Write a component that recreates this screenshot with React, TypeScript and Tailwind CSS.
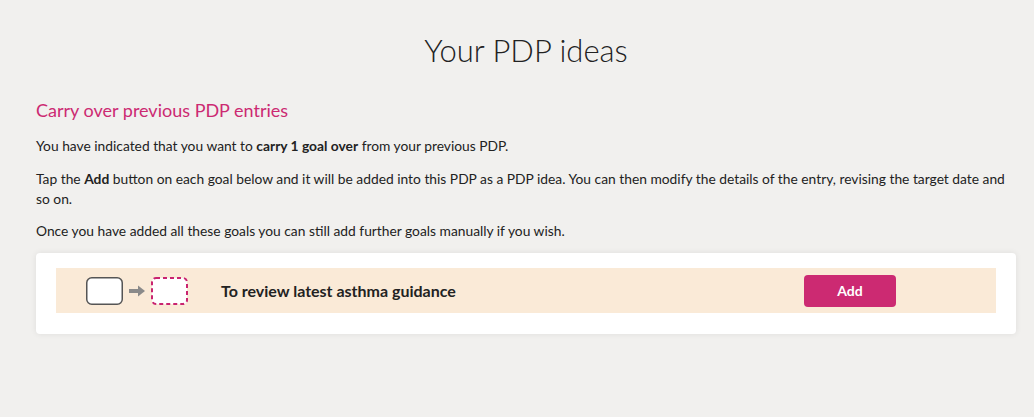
export default function App() {
  return (
    <div className="min-h-[417px] bg-[#f1f0ee] text-[#222] font-['Lato',sans-serif] pl-9 pr-[18px] pt-[28px]">
      <h1 className="text-center text-[31px] font-light leading-[44px] text-[#222]">Your PDP ideas</h1>

      <h2 className="mt-[27px] text-[18px] leading-[22px] text-[#cc2a72]">Carry over previous PDP entries</h2>

      <div className="mt-[15px] text-[13.8px] leading-[20px]">
        <p>
          You have indicated that you want to <b>carry 1 goal over</b> from your previous PDP.
        </p>
        <p className="mt-[13px]">
          Tap the <b>Add</b> button on each goal below and it will be added into this PDP as a PDP idea. You can then modify the details of the entry, revising the target date and so on.
        </p>
        <p className="mt-[12px]">Once you have added all these goals you can still add further goals manually if you wish.</p>
      </div>

      <div className="mt-[12px] bg-white rounded-[4px] shadow-[0_0_6px_rgba(0,0,0,0.08)] px-5 pt-[15px] pb-[21px]">
        <div className="bg-[#faead7] h-[45px] flex items-center pl-[30px]">
          <div className="flex items-center">
            <svg width="37" height="28" viewBox="0 0 37 28">
              <rect x="0.75" y="0.75" width="35.5" height="26.5" rx="5" fill="#fff" stroke="#555" strokeWidth="1.5" />
            </svg>
            <svg width="16" height="12" viewBox="0 0 16 12" className="mx-[6px]">
              <path d="M0 6h10" stroke="#8a8a8a" strokeWidth="4" />
              <path d="M9 0.5l7 5.5-7 5.5z" fill="#8a8a8a" />
            </svg>
            <svg width="37" height="28" viewBox="0 0 37 28">
              <rect x="1" y="1" width="35" height="26" rx="4" fill="#fff" stroke="#c92470" strokeWidth="2" strokeDasharray="4 3" />
            </svg>
          </div>
          <div className="ml-[33px] text-[16px] font-bold text-[#222]">To review latest asthma guidance</div>
          <button className="ml-auto mr-[100px] w-[92px] h-[32px] rounded-[4px] bg-[#cc2a72] text-white text-[14px] font-bold">
            Add
          </button>
        </div>
      </div>
    </div>
  );
}
